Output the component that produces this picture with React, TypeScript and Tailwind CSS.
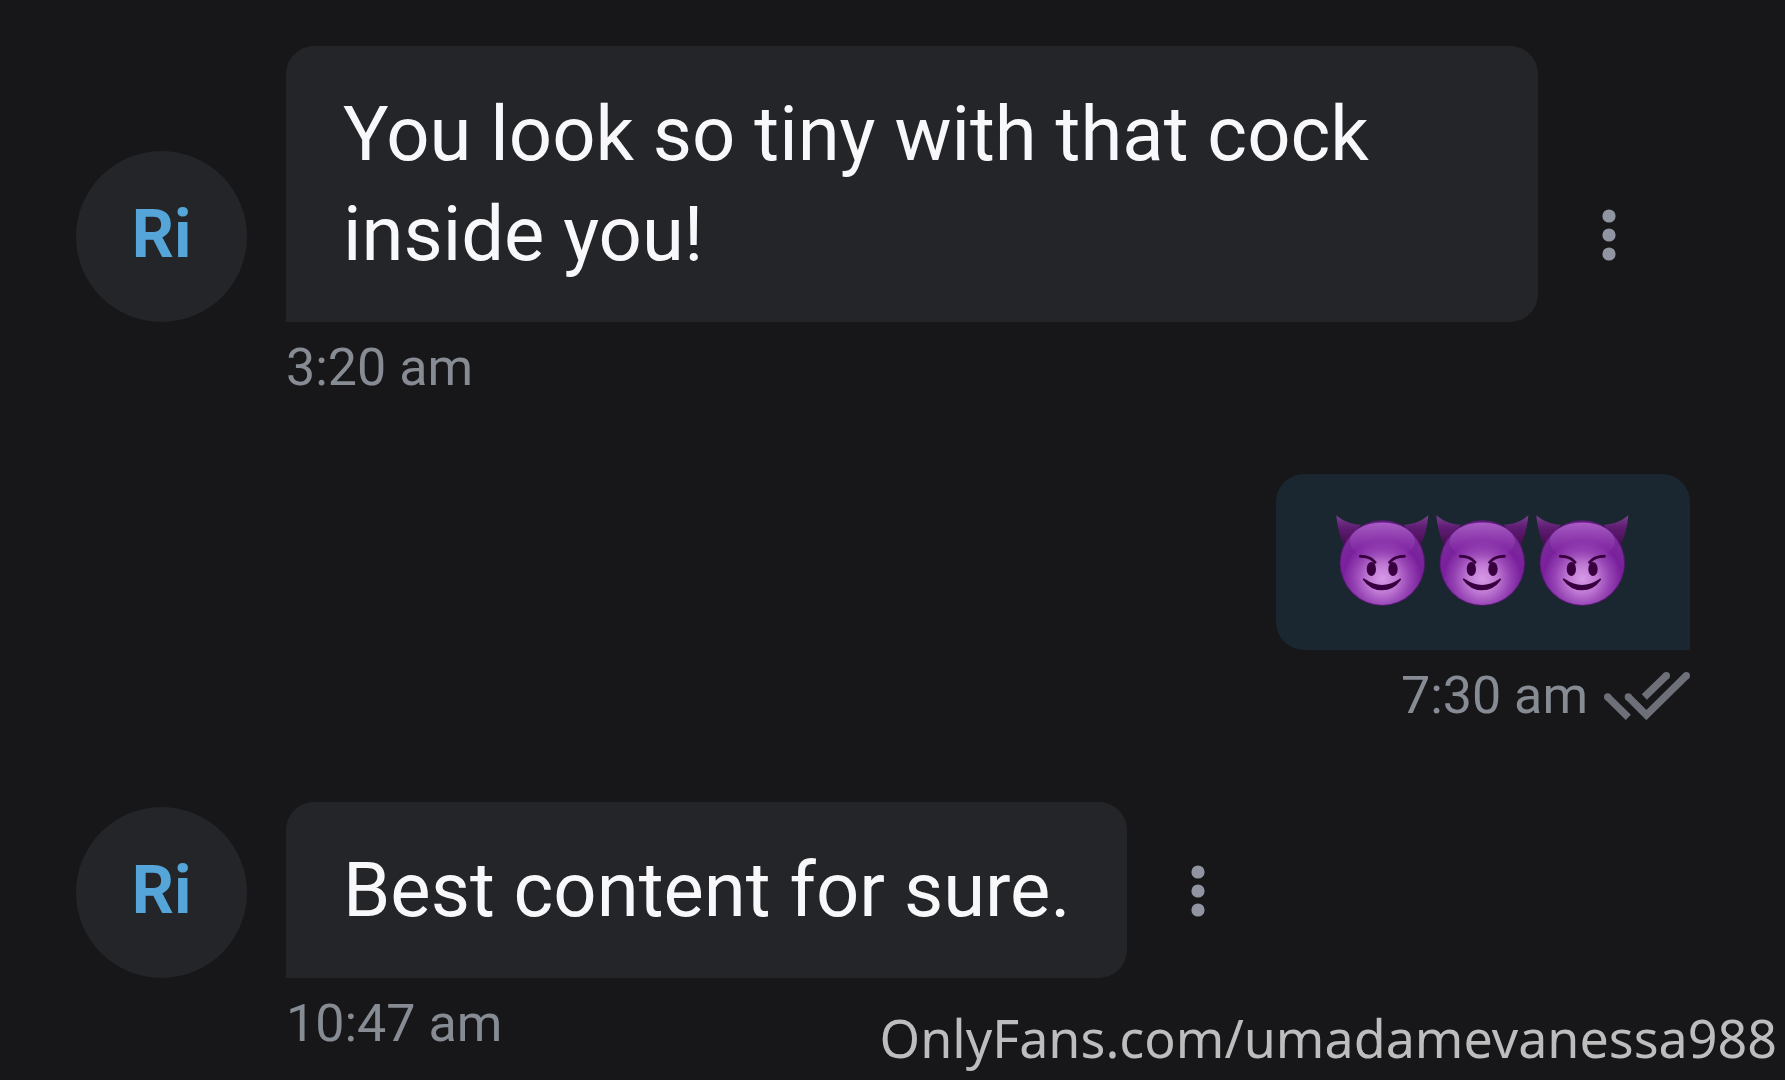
import { useId } from 'react';
import clsx from 'clsx';

type Message = {
  id: number;
  from: 'them' | 'me';
  text?: string;
  devils?: number;
  time: string;
};

const MESSAGES: Message[] = [
  { id: 1, from: 'them', text: 'You look so tiny with that cock inside you!', time: '3:20 am' },
  { id: 2, from: 'me', devils: 3, time: '7:30 am' },
  { id: 3, from: 'them', text: 'Best content for sure.', time: '10:47 am' },
];

function DevilEmoji() {
  const id = useId();
  const face = `${id}-face`;
  const shine = `${id}-shine`;
  const horn = `${id}-horn`;

  return (
    <svg viewBox="39 36 300 300" className="size-[100px] shrink-0" role="img" aria-label="smiling face with horns">
      <defs>
        <radialGradient id={face} gradientUnits="userSpaceOnUse" cx="187" cy="236" r="150">
          <stop offset="0" stopColor="#d79ae6" />
          <stop offset="0.28" stopColor="#c07ad4" />
          <stop offset="0.55" stopColor="#9644b4" />
          <stop offset="0.78" stopColor="#7a1f9c" />
          <stop offset="1" stopColor="#7a2b9b" />
        </radialGradient>
        <linearGradient id={shine} x1="0" y1="0" x2="0" y2="1">
          <stop offset="0" stopColor="#ab5fc6" stopOpacity="0.95" />
          <stop offset="1" stopColor="#8f35b0" stopOpacity="0" />
        </linearGradient>
        <linearGradient id={horn} x1="0" y1="0" x2="0" y2="1">
          <stop offset="0" stopColor="#7c4190" />
          <stop offset="0.4" stopColor="#5f1d74" />
          <stop offset="1" stopColor="#4a0b52" />
        </linearGradient>
      </defs>
      <path d="M49 46 C66 61 92 74 123 74 L72 136 C59 108 51 76 49 46Z" fill={`url(#${horn})`} />
      <path d="M325 46 C308 61 282 74 251 74 L302 136 C315 108 323 76 325 46Z" fill={`url(#${horn})`} />
      <circle cx="187" cy="189" r="128" fill="#5c1878" />
      <circle cx="187" cy="190" r="125" fill={`url(#${face})`} />
      <ellipse cx="187" cy="124" rx="98" ry="56" fill={`url(#${shine})`} />
      <g fill="none" stroke="#39003f" strokeLinecap="round">
        <path d="M121 169 Q151 169 165 187" strokeWidth="9" />
        <path d="M253 169 Q223 169 209 187" strokeWidth="9" />
      </g>
      <ellipse cx="154" cy="207" rx="14" ry="21" fill="#39003f" />
      <ellipse cx="219" cy="207" rx="14" ry="21" fill="#39003f" />
      <path d="M129 239 C127 235 132 234 136 238 Q186 272 237 238 C241 234 245 236 242 241 Q221 271 186 271 Q151 271 129 239Z" fill="#39003f" />
    </svg>
  );
}

function ReadMark() {
  return (
    <svg viewBox="42 48 258 144" className="h-12 w-[86px]" fill="none" stroke="#6d7078" strokeWidth="22" role="img" aria-label="Read">
      <path d="M53 123 L115 184" />
      <path d="M163 123 L229 59" />
      <path d="M115 123 L169 177 L289 59" />
      <g fill="#6d7078" stroke="none">
        <circle cx="53" cy="123" r="11" />
        <circle cx="115" cy="123" r="11" />
        <circle cx="229" cy="59" r="11" />
        <circle cx="289" cy="59" r="11" />
      </g>
    </svg>
  );
}

function MenuButton() {
  return (
    <button type="button" aria-label="Message options" className="ml-[49px] flex h-[174px] w-11 shrink-0 items-center justify-center">
      <svg viewBox="0 0 14 52" className="h-[52px] w-[14px]" fill="#9095a1">
        <circle cx="7" cy="7" r="6.6" />
        <circle cx="7" cy="26" r="6.6" />
        <circle cx="7" cy="45" r="6.6" />
      </svg>
    </button>
  );
}

function MessageRow({ message }: { message: Message }) {
  const mine = message.from === 'me';

  return (
    <li className={clsx('flex flex-col', mine ? 'items-end' : 'items-start')}>
      <div className="flex max-w-full items-end">
        {!mine && (
          <div className="mr-[39px] flex size-[171px] shrink-0 items-center justify-center rounded-full bg-[#242529] pb-1 text-[66px] font-bold text-[#55a5d9]">
            Ri
          </div>
        )}
        <div
          className={clsx(
            'flex max-w-[1252px] rounded-[28px] px-[57px] py-[38px] text-[76px] leading-[100px] text-[#f8f8fa]',
            mine ? 'rounded-br-none bg-[#1a2730]' : 'rounded-bl-none bg-[#242529]'
          )}
        >
          {message.text && <p>{message.text}</p>}
          {Array.from({ length: message.devils ?? 0 }, (_, i) => (
            <DevilEmoji key={i} />
          ))}
        </div>
        {!mine && <MenuButton />}
      </div>
      <div className={clsx('mt-[6px] flex items-center gap-4 text-[52px] leading-[80px] text-[#868b94]', !mine && 'ml-[210px]')}>
        <time>{message.time}</time>
        {mine && <ReadMark />}
      </div>
    </li>
  );
}

export default function App() {
  return (
    <main className="relative min-h-screen bg-[#171719] font-['Roboto',sans-serif]">
      <ul className="flex flex-col gap-[66px] pt-[46px] pr-[95px] pl-[76px]">
        {MESSAGES.map((message) => (
          <MessageRow key={message.id} message={message} />
        ))}
      </ul>
      <a
        href="#profile"
        className="absolute right-2 bottom-[6px] text-[52px] leading-[72px] text-[#bdbdbe] font-['Noto_Sans',sans-serif]"
      >
        OnlyFans.com/umadamevanessa988
      </a>
    </main>
  );
}
